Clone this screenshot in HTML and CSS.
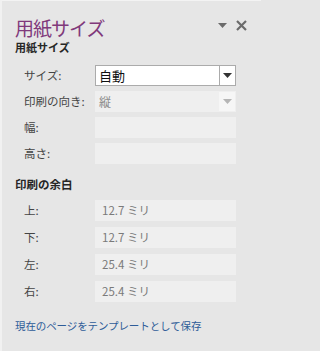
FILE: index.html
```html
<!DOCTYPE html>
<html lang="ja">
<head>
<meta charset="utf-8">
<link rel="stylesheet" href="styles.css">
</head>
<body>
<div class="pane">
  <div class="header">
    <h1 class="title">用紙サイズ</h1>
    <div class="tools">
      <svg class="menu-icon" width="9" height="5" viewBox="0 0 9 5"><path d="M0 0H9L4.5 5Z" fill="#6b6b6b"/></svg>
      <svg class="close-icon" width="11" height="11" viewBox="0 0 11 11"><path d="M1 1L10 10M10 1L1 10" stroke="#6b6b6b" stroke-width="2.2"/></svg>
    </div>
  </div>
  <h2 class="section">用紙サイズ</h2>
  <div class="form first">
    <span class="label">サイズ:</span>
    <div class="select">
      <span class="value">自動</span>
      <span class="arrow"><svg width="9" height="5" viewBox="0 0 9 5"><path d="M0 0H9L4.5 5Z" fill="#333"/></svg></span>
    </div>
    <span class="label">印刷の向き:</span>
    <div class="select disabled">
      <span class="value">縦</span>
      <span class="arrow"><svg width="9" height="5" viewBox="0 0 9 5"><path d="M0 0H9L4.5 5Z" fill="#b5b5b5"/></svg></span>
    </div>
    <span class="label">幅:</span>
    <div class="field"></div>
    <span class="label">高さ:</span>
    <div class="field"></div>
  </div>
  <h2 class="section margins">印刷の余白</h2>
  <div class="form second">
    <span class="label">上:</span>
    <div class="field">12.7 ミリ</div>
    <span class="label">下:</span>
    <div class="field">12.7 ミリ</div>
    <span class="label">左:</span>
    <div class="field">25.4 ミリ</div>
    <span class="label">右:</span>
    <div class="field">25.4 ミリ</div>
  </div>
  <a class="link" href="#">現在のページをテンプレートとして保存</a>
</div>
</body>
</html>
```
FILE: styles.css
```css
html, body {
  margin: 0;
  padding: 0;
  background: #e6e6e6;
}
body {
  font-family: "Noto Sans CJK JP", "Noto Sans", sans-serif;
  width: 261px;
  height: 351px;
  overflow: hidden;
}
.pane {
  box-sizing: border-box;
  height: 351px;
  border-top: 1px solid #f3f3f3;
  border-left: 2px solid #f1f1f1;
  padding-left: 13px;
}
.header {
  display: flex;
  align-items: flex-start;
  padding-top: 16px;
}
.title {
  margin: 0;
  font-size: 19px;
  line-height: 22px;
  font-weight: normal;
  letter-spacing: -1px;
  color: #80397b;
  flex: 1;
}
.tools {
  display: flex;
  align-items: center;
  gap: 9px;
  padding-top: 3px;
  padding-right: 14px;
}
.section {
  margin: 1px 0 0;
  font-size: 11px;
  line-height: 14px;
  font-weight: bold;
  color: #262626;
}
.margins {
  margin-top: 13px;
  font-size: 11.5px;
}
.form {
  display: grid;
  grid-template-columns: 71px 141px;
  grid-auto-rows: 21px;
  row-gap: 5px;
  margin-top: 11px;
  padding-left: 9px;
  align-items: center;
}
.form.second {
  row-gap: 6px;
  margin-top: 9px;
}
.label {
  font-size: 11.5px;
  color: #444;
  line-height: 21px;
}
.select {
  box-sizing: border-box;
  height: 21px;
  display: flex;
  background: #fff;
  border: 1px solid #ababab;
}
.select .value {
  flex: 1;
  padding-left: 3px;
  font-size: 13px;
  line-height: 19px;
  color: #111;
}
.select .arrow {
  width: 15px;
  border-left: 1px solid #ababab;
  display: flex;
  align-items: center;
  justify-content: center;
}
.select.disabled {
  background: #efefef;
  border-color: #efefef;
}
.select.disabled .value {
  font-size: 12px;
  color: #8a8a8a;
}
.select.disabled .arrow {
  background: #f6f6f6;
  border-left-color: #f6f6f6;
}
.field {
  box-sizing: border-box;
  height: 21px;
  background: #efefef;
  padding-left: 7px;
  font-size: 11.5px;
  line-height: 21px;
  color: #7a7a7a;
}
.link {
  display: block;
  margin-top: 17px;
  font-size: 10.5px;
  line-height: 14px;
  color: #2e5c98;
  text-decoration: none;
  letter-spacing: -0.1px;
}
```
